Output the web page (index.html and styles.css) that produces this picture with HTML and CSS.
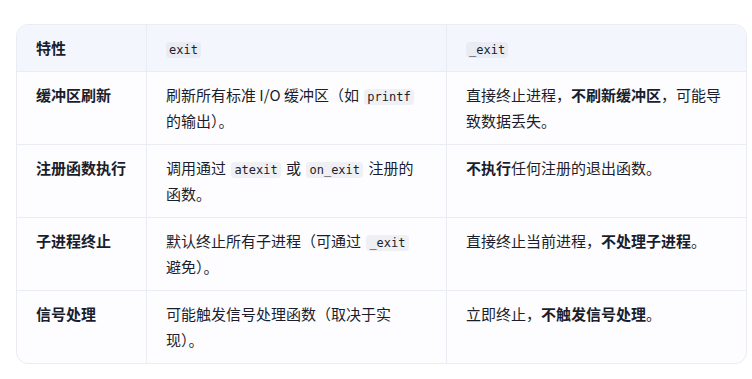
FILE: index.html
```html
<!DOCTYPE html>
<html lang="zh-CN">
<head>
<meta charset="utf-8">
<title>exit vs _exit</title>
<link rel="stylesheet" href="styles.css">
</head>
<body>
<div class="table-wrap">
  <table class="cmp">
    <colgroup>
      <col class="c1">
      <col class="c2">
      <col class="c3">
    </colgroup>
    <thead>
      <tr>
        <th>特性</th>
        <th class="normal"><code>exit</code></th>
        <th class="normal"><code>_exit</code></th>
      </tr>
    </thead>
    <tbody>
      <tr>
        <td class="key">缓冲区刷新</td>
        <td>刷新所有标准 I/O 缓冲区（如 <code>printf</code> 的输出）。</td>
        <td>直接终止进程，<strong>不刷新缓冲区</strong>，可能导致数据丢失。</td>
      </tr>
      <tr>
        <td class="key">注册函数执行</td>
        <td>调用通过 <code>atexit</code> 或 <code>on_exit</code> 注册的函数。</td>
        <td><strong>不执行</strong>任何注册的退出函数。</td>
      </tr>
      <tr>
        <td class="key">子进程终止</td>
        <td>默认终止所有子进程（可通过 <code>_exit</code> 避免）。</td>
        <td>直接终止当前进程，<strong>不处理子进程</strong>。</td>
      </tr>
      <tr>
        <td class="key">信号处理</td>
        <td>可能触发信号处理函数（取决于实现）。</td>
        <td>立即终止，<strong>不触发信号处理</strong>。</td>
      </tr>
    </tbody>
  </table>
</div>
</body>
</html>
```

FILE: styles.css
```css
html, body {
  margin: 0;
  padding: 0;
  background: #ffffff;
}

body {
  padding: 24px 5px 0 16px;
  font-family: "Noto Sans CJK SC", "Noto Sans", sans-serif;
  font-size: 15px;
  color: #1b1d2c;
}

.table-wrap {
  border: 1px solid #eaecf3;
  border-radius: 12px;
  overflow: hidden;
  background: #fdfdff;
}

.cmp {
  width: 100%;
  table-layout: fixed;
  border-collapse: separate;
  border-spacing: 0;
}

.c1 { width: 130px; }
.c2 { width: 300px; }
.c3 { width: 299px; }

.cmp th,
.cmp td {
  padding: 10px 20px 10px 19px;
  line-height: 26px;
  text-align: left;
  vertical-align: top;
  border-right: 1px solid #eaecf3;
  border-bottom: 1px solid #eaecf3;
}

.cmp th:last-child,
.cmp td:last-child {
  border-right: none;
}

.cmp tbody tr:last-child td {
  border-bottom: none;
}

.cmp thead th {
  background: #f4f6fd;
  font-weight: 700;
}

.cmp thead th.normal {
  font-weight: 400;
}

.cmp td.key {
  font-weight: 700;
}

.cmp strong {
  font-weight: 700;
}

.cmp code {
  font-family: "DejaVu Sans Mono", "Liberation Mono", monospace;
  font-size: 12px;
  line-height: 1;
  background: #eff0f4;
  border-radius: 4px;
  padding: 1px 3px;
  margin: 0 2px;
  color: #1b1d2c;
}

.cmp thead code {
  background: #e9ecf3;
  margin: 0;
}
```
